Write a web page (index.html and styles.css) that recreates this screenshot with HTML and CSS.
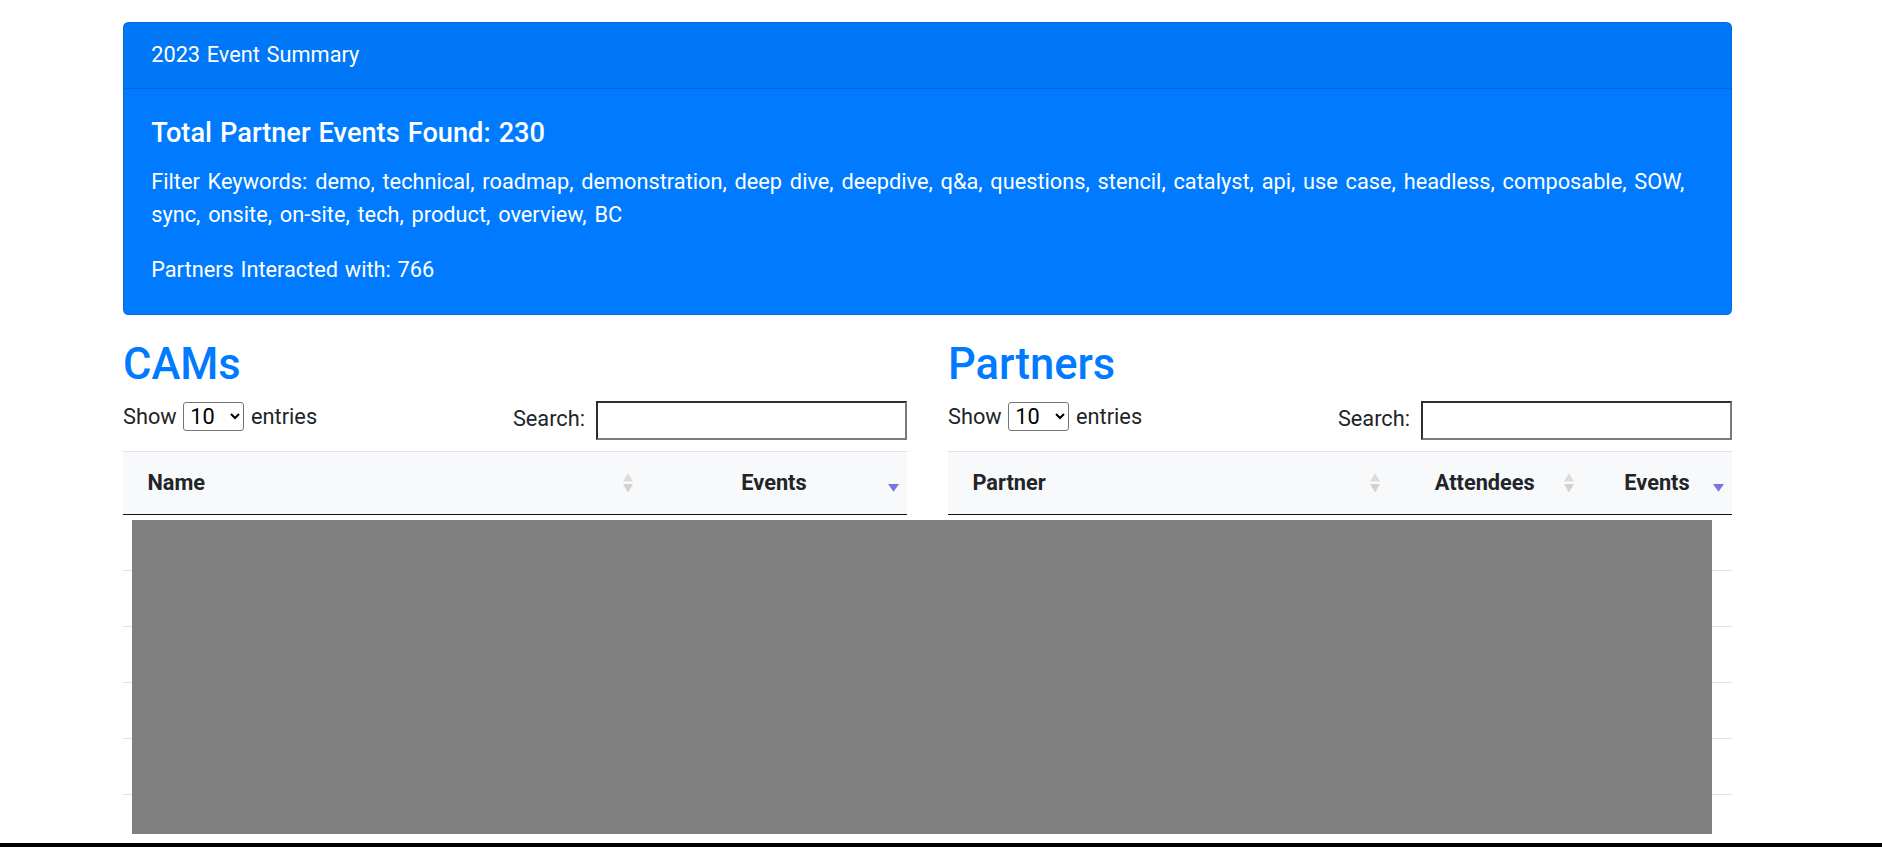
FILE: index.html
```html
<!DOCTYPE html>
<html lang="en">
<head>
<meta charset="utf-8">
<title>2023 Event Summary</title>
<link rel="stylesheet" href="styles.css">
</head>
<body>
<div class="page">
  <div class="container">
    <div class="card">
      <div class="card-header">2023 Event Summary</div>
      <div class="card-body">
        <h5 class="card-title">Total Partner Events Found: 230</h5>
        <p class="card-text keywords">Filter Keywords: demo, technical, roadmap, demonstration, deep dive, deepdive, q&amp;a, questions, stencil, catalyst, api, use case, headless, composable, SOW, sync, onsite, on-site, tech, product, overview, BC</p>
        <p class="card-text">Partners Interacted with: 766</p>
      </div>
    </div>

    <div class="cols">
      <section class="col">
        <h2 class="title">CAMs</h2>
        <div class="dt-top">
          <div class="dt-length">Show <select class="dt-select"><option>10</option><option>25</option><option>50</option><option>100</option></select> entries</div>
          <div class="dt-filter"><span class="dt-label">Search:</span><input class="dt-input" type="search"></div>
        </div>
        <table class="dt">
          <colgroup><col class="c-name"><col class="c-events-l"></colgroup>
          <thead>
            <tr>
              <th>Name<svg class="sort" viewBox="0 0 26 26"><polygon class="both-up" points="13,3 18,11.5 8,11.5"/><polygon class="both-down" points="8,14 18,14 13,22.5"/></svg></th>
              <th class="center">Events<svg class="sort" viewBox="0 0 26 26"><polygon class="desc" points="7,14 18,14 12.5,21.7"/></svg></th>
            </tr>
          </thead>
          <tbody>
            <tr><td>&nbsp;</td><td>&nbsp;</td></tr>
            <tr><td>&nbsp;</td><td>&nbsp;</td></tr>
            <tr><td>&nbsp;</td><td>&nbsp;</td></tr>
            <tr><td>&nbsp;</td><td>&nbsp;</td></tr>
            <tr><td>&nbsp;</td><td>&nbsp;</td></tr>
            <tr><td>&nbsp;</td><td>&nbsp;</td></tr>
          </tbody>
        </table>
      </section>

      <section class="col">
        <h2 class="title">Partners</h2>
        <div class="dt-top">
          <div class="dt-length">Show <select class="dt-select"><option>10</option><option>25</option><option>50</option><option>100</option></select> entries</div>
          <div class="dt-filter"><span class="dt-label">Search:</span><input class="dt-input" type="search"></div>
        </div>
        <table class="dt">
          <colgroup><col class="c-partner"><col class="c-attendees"><col class="c-events-r"></colgroup>
          <thead>
            <tr>
              <th>Partner<svg class="sort" viewBox="0 0 26 26"><polygon class="both-up" points="13,3 18,11.5 8,11.5"/><polygon class="both-down" points="8,14 18,14 13,22.5"/></svg></th>
              <th class="center">Attendees<svg class="sort" viewBox="0 0 26 26"><polygon class="both-up" points="13,3 18,11.5 8,11.5"/><polygon class="both-down" points="8,14 18,14 13,22.5"/></svg></th>
              <th class="center">Events<svg class="sort" viewBox="0 0 26 26"><polygon class="desc" points="7,14 18,14 12.5,21.7"/></svg></th>
            </tr>
          </thead>
          <tbody>
            <tr><td>&nbsp;</td><td>&nbsp;</td><td>&nbsp;</td></tr>
            <tr><td>&nbsp;</td><td>&nbsp;</td><td>&nbsp;</td></tr>
            <tr><td>&nbsp;</td><td>&nbsp;</td><td>&nbsp;</td></tr>
            <tr><td>&nbsp;</td><td>&nbsp;</td><td>&nbsp;</td></tr>
            <tr><td>&nbsp;</td><td>&nbsp;</td><td>&nbsp;</td></tr>
            <tr><td>&nbsp;</td><td>&nbsp;</td><td>&nbsp;</td></tr>
          </tbody>
        </table>
      </section>
    </div>
  </div>

  <div class="redact"></div>
</div>
<div class="bottom-bar"></div>
</body>
</html>
```

FILE: styles.css
```css
html {
  font-size: 21.76px;
}

body {
  margin: 0;
  font-family: Roboto, "Noto Sans", "Liberation Sans", sans-serif;
  font-size: 1rem;
  line-height: 1.5;
  word-spacing: 1.3px;
  color: #212529;
  background: #fff;
  overflow: hidden;
}

.page {
  position: relative;
  display: flow-root;
  min-height: 847px;
}

.container {
  width: 1609px;
  margin-left: 123px;
}

/* summary card */
.card {
  margin-top: 21.76px;
  background: #007bff;
  color: #fff;
  border: 1.36px solid rgba(0, 0, 0, 0.125);
  border-radius: 5.44px;
}

.card-header {
  padding: 16.32px 27.2px;
  background: rgba(0, 0, 0, 0.03);
  border-bottom: 1.36px solid rgba(0, 0, 0, 0.125);
  border-radius: 4.1px 4.1px 0 0;
}

.card-body {
  padding: 28.4px 27.2px 26.6px;
}

.card-title {
  margin: 0 0 16.32px;
  font-size: 27.2px;
  font-weight: 500;
  line-height: 1.2;
}

.card-text {
  margin: 0 0 22.8px;
}

.card-text.keywords {
  word-spacing: 2.4px;
}

.card-text:last-child {
  margin-bottom: 0;
}

/* two columns */
.cols {
  display: grid;
  grid-template-columns: 784px 784px;
  column-gap: 41px;
  margin-top: 24.5px;
}

.title {
  margin: 0 0 9.7px;
  font-size: 43.52px;
  font-weight: 500;
  line-height: 1.2;
  word-spacing: 0;
  color: #007bff;
}

/* datatables controls */
.dt-top {
  display: flex;
  justify-content: space-between;
  align-items: flex-start;
  height: 50.4px;
}

.dt-length {
  line-height: 32.64px;
  white-space: nowrap;
}

.dt-select {
  width: 61px;
  height: 29.5px;
  font-family: inherit;
  font-size: 21.76px;
  color: #000;
  background: #fff;
  border: 1.36px solid #767676;
  border-radius: 3px;
  padding: 0 0 0 2px;
  margin: 0;
  vertical-align: baseline;
}

.dt-filter {
  display: flex;
  align-items: flex-start;
}

.dt-label {
  line-height: 32.64px;
  padding-top: 2.3px;
  white-space: nowrap;
}

.dt-input {
  box-sizing: border-box;
  width: 311px;
  height: 39px;
  margin: 0 0 0 11px;
  padding: 1px 3px;
  font-family: inherit;
  font-size: 21.76px;
  background: #fff;
  border-style: solid;
  border-width: 2.6px;
  border-color: #2e2e2e #7a7a7a #7a7a7a #2e2e2e;
  border-radius: 0;
  outline: none;
}

/* tables */
.dt {
  width: 100%;
  table-layout: fixed;
  border-collapse: collapse;
}

.c-name { width: 518px; }
.c-events-l { width: 266px; }
.c-partner { width: 439.5px; }
.c-attendees { width: 194.5px; }
.c-events-r { width: 150px; }

.dt th {
  position: relative;
  padding: 14.3px 24.48px;
  line-height: 32.64px;
  font-weight: 700;
  text-align: left;
  word-spacing: 0;
  background: #f8f9fa;
  border-top: 1px solid #dee2e6;
  border-bottom: 1.4px solid #111;
  white-space: nowrap;
}

.dt th.center {
  text-align: center;
}

.dt td {
  padding: 11.2px 13.6px;
  line-height: 32.64px;
  border-top: 1px solid #dee2e6;
}

.sort {
  position: absolute;
  right: 0;
  top: 50%;
  width: 26px;
  height: 26px;
  margin-top: -13px;
}

.both-up {
  fill: #dcdcdc;
}

.both-down {
  fill: #d2d2d2;
}

.desc {
  fill: #7676e0;
}

/* redaction box covering the table bodies */
.redact {
  position: absolute;
  left: 132px;
  top: 520px;
  width: 1580px;
  height: 314px;
  background: #808080;
}

.bottom-bar {
  position: fixed;
  left: 0;
  right: 0;
  bottom: 0;
  height: 4.3px;
  background: #000;
}
```
